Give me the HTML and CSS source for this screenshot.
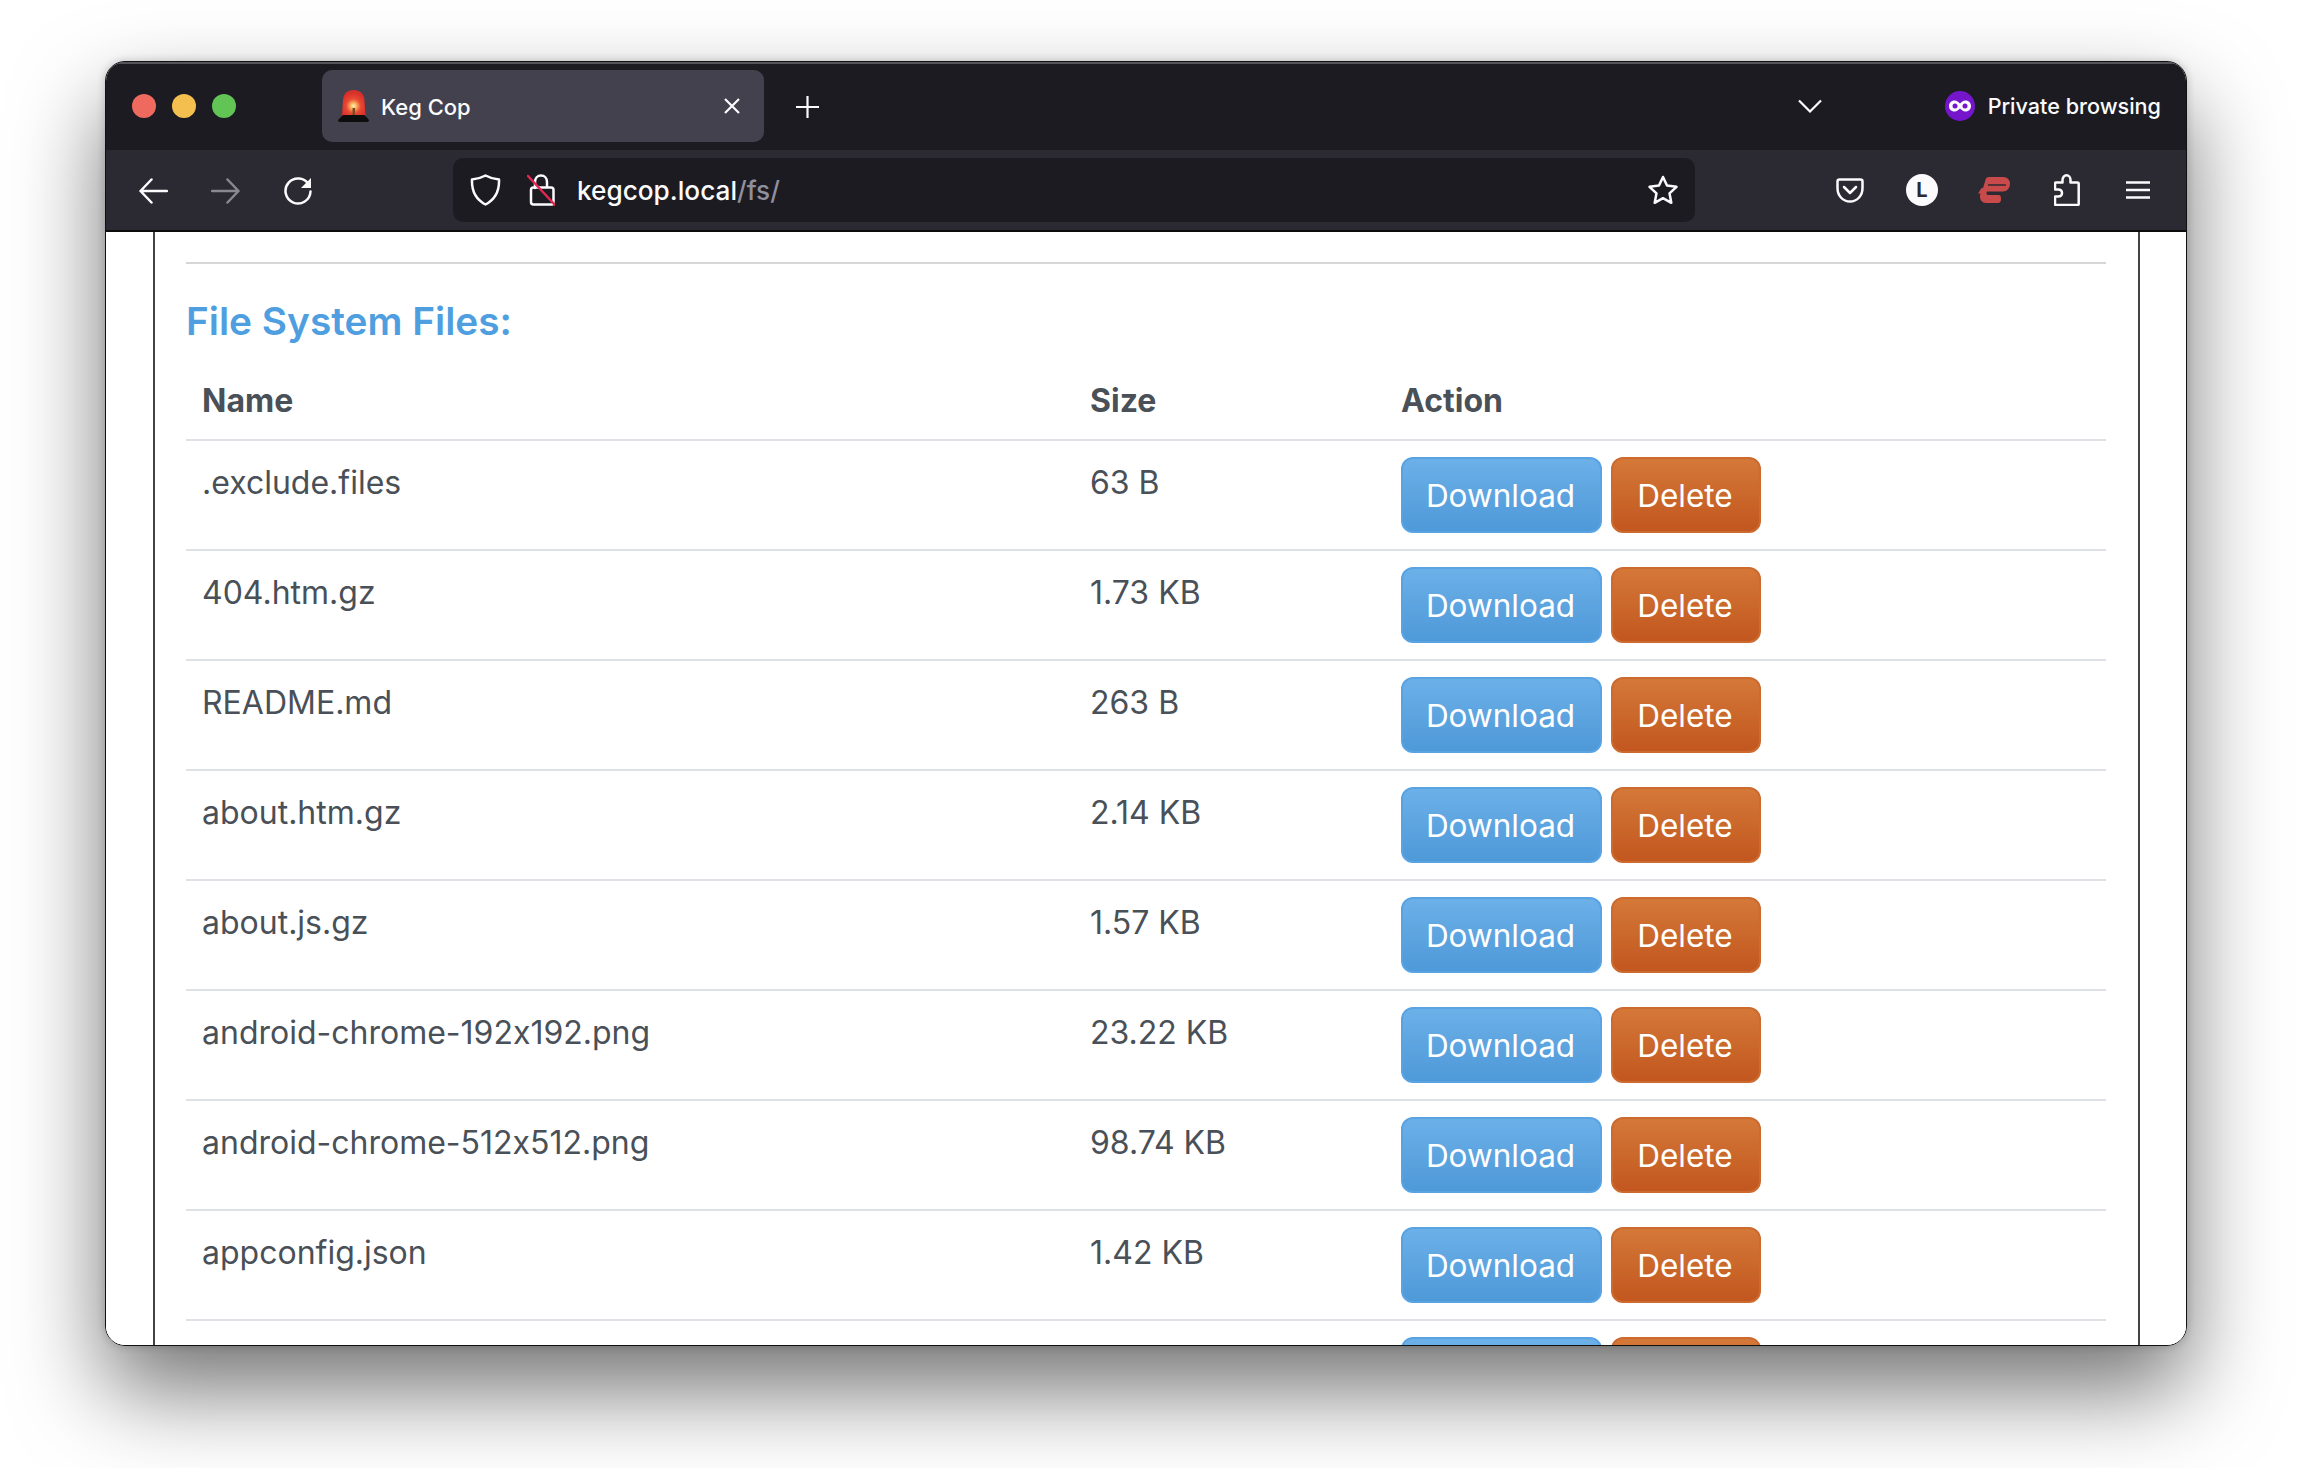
FILE: index.html
```html
<!DOCTYPE html>
<html lang="en">
<head>
    <meta charset="UTF-8">
    <title>Keg Cop</title>
    <link rel="stylesheet" href="styles.css">
</head>
<body>
    <div class="window">
        <div class="titlebar">
            <span class="light red"></span>
            <span class="light yellow"></span>
            <span class="light green"></span>
            <div class="tab">
                <svg class="siren" width="32" height="32" viewBox="0 0 32 32">
                    <defs>
                        <radialGradient id="sirenGlow" gradientUnits="userSpaceOnUse" cx="15.500" cy="16" r="13">
                            <stop offset="0" stop-color="#fff3c4"/>
                            <stop offset="0.22" stop-color="#fbb45e"/>
                            <stop offset="0.55" stop-color="#ea4a35"/>
                            <stop offset="1" stop-color="#d9302a"/>
                        </radialGradient>
                    </defs>
                    <path d="M4 26 L5 10 C5.500 3.500 9.500 0 15.500 0 C21.500 0 26 3.500 26.500 10 L27.500 26 Z" fill="url(#sirenGlow)"/>
                    <rect x="14.500" y="18" width="2.500" height="7" fill="#7a4a20"/>
                    <path d="M5 25 H26.500 L31 30 C31 31.500 30 32 28 32 H3 C1 32 0 31.500 0 30 Z" fill="#0e0e0e"/>
                </svg>
                <span class="tab-title">Keg Cop</span>
                <svg class="tab-close" width="16" height="16" viewBox="0 0 16 16"><path d="M1 1 L15 15 M15 1 L1 15"/></svg>
            </div>
            <svg class="new-tab" width="25" height="24" viewBox="0 0 25 24"><path d="M12.500 1 V23 M1 12 H24"/></svg>
            <svg class="tab-list" width="24" height="14" viewBox="0 0 24 14"><path d="M1 1.500 L12 12.500 L23 1.500"/></svg>
            <div class="private">
                <svg width="30" height="30" viewBox="0 0 30 30">
                    <circle cx="15" cy="15" r="15" fill="#7516cc"/>
                    <path d="M9.500 9.500 C12 9.500 13.500 11 15 12.500 C16.500 11 18 9.500 20.500 9.500 C24 9.500 26 12 26 15 C26 18 24 20.500 20.500 20.500 C18 20.500 16.500 19 15 17.500 C13.500 19 12 20.500 9.500 20.500 C6 20.500 4 18 4 15 C4 12 6 9.500 9.500 9.500 Z" fill="#fbfbfe"/>
                    <circle cx="10" cy="15" r="2.500" fill="#7516cc"/>
                    <circle cx="20" cy="15" r="2.500" fill="#7516cc"/>
                </svg>
                <span>Private browsing</span>
            </div>
        </div>

        <div class="toolbar">
            <svg class="icon back" width="29" height="26" viewBox="0 0 29 26"><path d="M12.500 1.500 L1.500 13 L12.500 24.500 M1.500 13 H28"/></svg>
            <svg class="icon forward" width="29" height="26" viewBox="0 0 29 26"><path d="M16.500 1.500 L27.500 13 L16.500 24.500 M27.500 13 H1"/></svg>
            <svg class="icon reload" width="29" height="28" viewBox="0 0 29 28">
                <path d="M26 8 A12.500 12.500 0 1 0 27.500 14.500"/>
                <path class="solid" d="M28 1 V11 H18 Z"/>
            </svg>
            <div class="urlbar">
                <svg class="icon shield" width="31" height="32" viewBox="0 0 31 32"><path d="M15.500 1.500 C19 3.500 24 5 29 5.500 C29.500 17 25 25.500 15.500 30.500 C6 25.500 1.500 17 2 5.500 C7 5 12 3.500 15.500 1.500 Z"/></svg>
                <svg class="icon lock" width="28" height="32" viewBox="0 0 28 32">
                    <path d="M8 14 V8 C8 4 10.500 1.500 14 1.500 C17.500 1.500 20 4 20 8 V13 M4 16 V28 C4 29.500 5 30.500 6.500 30.500 H25 C26 30.500 26.500 29.500 26.500 28 V16 C26.500 14.500 25.500 13.500 24 13.500 H6.500 C5 13.500 4 14.500 4 16 Z"/>
                    <path class="strike" d="M1 2 L28 31"/>
                </svg>
                <span class="url">kegcop.local<span class="url-path">/fs/</span></span>
                <svg class="icon star" width="32" height="30" viewBox="0 0 32 30"><path d="M16 2 L20 10.500 L29.500 11.800 L22.500 18.300 L24.300 27.800 L16 23.200 L7.700 27.800 L9.500 18.300 L2.500 11.800 L12 10.500 Z"/></svg>
            </div>
            <svg class="icon pocket" width="28" height="25" viewBox="0 0 28 25"><path d="M3.500 1.500 H24.500 C25.800 1.500 26.500 2.200 26.500 3.500 V10 C26.500 18 21 23.500 14 23.500 C7 23.500 1.500 18 1.500 10 V3.500 C1.500 2.200 2.200 1.500 3.500 1.500 Z M8 9 L14 15 L20 9"/></svg>
            <span class="account">L</span>
            <svg class="vpn" width="32" height="26" viewBox="0 0 32 26">
                <path d="M8 1.500 C8.500 0.500 10 0 12 0 H25 C29.500 0 32 3 32 6.500 C32 11 29 14.500 25 14.500 H9 C8 16 8.500 18 10 18 H20.500 C22.500 18 23 19.500 23 22 C23 24.500 22 26 20 26 H8 C4 26 2 23 2 19.500 C2 18.500 2 17.500 2.500 16.500 H0 L3.500 11 H5 Z"/>
                <path class="vpn-slit" d="M10 8 H28"/>
            </svg>
            <svg class="icon puzzle" width="26" height="32" viewBox="0 0 26 32"><path d="M2 31 C1.300 31 1 30.500 1 30 V22.500 H4 C6.500 22.500 8 21 8 19 C8 17 6.500 15.500 4 15.500 H1 V9.500 C1 9 1.300 8.500 2 8.500 H8.500 V6 C8.500 3 10.500 1.300 12.500 1.300 C14.500 1.300 16.500 3 16.500 6 V8.500 H23.500 C24.300 8.500 24.700 9 24.700 9.500 V30 C24.700 30.500 24.300 31 23.500 31 Z"/></svg>
            <svg class="icon menu" width="24" height="18" viewBox="0 0 24 18"><path d="M0 1.500 H24 M0 9 H24 M0 16.500 H24"/></svg>
        </div>

        <div class="page">
            <div class="card">
                <hr class="rule">
                <h2 class="heading">File System Files:</h2>
                <table class="files">
                    <thead>
                        <tr>
                            <th class="col-name">Name</th>
                            <th class="col-size">Size</th>
                            <th>Action</th>
                        </tr>
                    </thead>
                    <tbody>
                        <tr><td>.exclude.files</td><td>63 B</td><td class="actions"><button class="btn primary">Download</button><button class="btn danger">Delete</button></td></tr>
                        <tr><td>404.htm.gz</td><td>1.73 KB</td><td class="actions"><button class="btn primary">Download</button><button class="btn danger">Delete</button></td></tr>
                        <tr><td>README.md</td><td>263 B</td><td class="actions"><button class="btn primary">Download</button><button class="btn danger">Delete</button></td></tr>
                        <tr><td>about.htm.gz</td><td>2.14 KB</td><td class="actions"><button class="btn primary">Download</button><button class="btn danger">Delete</button></td></tr>
                        <tr><td>about.js.gz</td><td>1.57 KB</td><td class="actions"><button class="btn primary">Download</button><button class="btn danger">Delete</button></td></tr>
                        <tr><td>android-chrome-192x192.png</td><td>23.22 KB</td><td class="actions"><button class="btn primary">Download</button><button class="btn danger">Delete</button></td></tr>
                        <tr><td>android-chrome-512x512.png</td><td>98.74 KB</td><td class="actions"><button class="btn primary">Download</button><button class="btn danger">Delete</button></td></tr>
                        <tr><td>appconfig.json</td><td>1.42 KB</td><td class="actions"><button class="btn primary">Download</button><button class="btn danger">Delete</button></td></tr>
                        <tr><td></td><td></td><td class="actions"><button class="btn primary"></button><button class="btn danger"></button></td></tr>
                    </tbody>
                </table>
            </div>
        </div>
    </div>
</body>
</html>
```

FILE: styles.css
```css
html, body {
    margin: 0;
    height: 1468px;
    overflow: hidden;
}
body {
    background-color: #fff;
    font-family: Inter, "Liberation Sans", sans-serif;
    font-feature-settings: "calt" 0;
    padding: 61px 0 0 105px;
    box-sizing: border-box;
}
.window {
    width: 2082px;
    height: 1285px;
    box-sizing: border-box;
    border: 1px solid #111;
    border-radius: 20px;
    overflow: hidden;
    display: flex;
    flex-direction: column;
    box-shadow: 0 44px 90px rgba(0, 0, 0, 0.55), 0 0 8px rgba(0, 0, 0, 0.2);
}

/* title bar */
.titlebar {
    height: 88px;
    flex: none;
    background-color: #1c1b22;
    box-shadow: inset 0 2px 0 #55545a;
    display: flex;
    align-items: center;
    padding: 0 25px 0 26px;
    box-sizing: border-box;
}
.light {
    width: 24px;
    height: 24px;
    border-radius: 50%;
    margin-right: 16px;
    flex: none;
}
.red { background-color: #ee6a5f; }
.yellow { background-color: #f5bf4f; }
.green { background-color: #61c454; margin-right: 0; }
.tab {
    width: 442px;
    height: 72px;
    margin-left: 86px;
    background-color: #42414d;
    border-radius: 10px;
    display: flex;
    align-items: center;
    padding: 0 24px 0 16px;
    box-sizing: border-box;
}
.tab-title {
    color: #fbfbfe;
    font-size: 22px;
    margin: 2px 0 0 11px;
    font-weight: 500;
}
.tab-close {
    margin-left: auto;
}
.tab-close path, .new-tab path, .tab-list path {
    stroke: #fbfbfe;
    stroke-width: 2.2;
    fill: none;
}
.new-tab {
    margin: 2px 0 0 31px;
}
.tab-list {
    margin-left: auto;
}
.private {
    display: flex;
    align-items: center;
    margin-left: 123px;
    color: #fbfbfe;
    font-size: 21.6px;
    font-weight: 500;
}
.private span {
    margin-left: 13px;
}

/* toolbar */
.toolbar {
    height: 82px;
    flex: none;
    background-color: #2b2a33;
    border-bottom: 2px solid #0c0c0d;
    box-sizing: border-box;
    display: flex;
    align-items: center;
    padding-left: 33px;
}
.icon path {
    stroke: #fbfbfe;
    stroke-width: 2.5;
    fill: none;
    stroke-linejoin: round;
    stroke-linecap: round;
}
.icon path.solid {
    fill: #fbfbfe;
    stroke: none;
}
.icon path.strike {
    stroke: #e22850;
}
.back {
    margin-top: 2px;
}
.forward {
    margin: 2px 0 0 43px;
    opacity: 0.45;
}
.reload {
    margin: 2px 0 0 43px;
}
.urlbar {
    width: 1242px;
    height: 64px;
    margin-left: 141px;
    background-color: #1c1b22;
    border-radius: 10px;
    display: flex;
    align-items: center;
    padding: 0 16px 0 17px;
    box-sizing: border-box;
}
.lock {
    margin-left: 26px;
}
.url {
    margin-left: 22px;
    color: #fbfbfe;
    font-size: 26.2px;
    font-weight: 500;
}
.url-path {
    color: #8f8f9d;
}
.star {
    margin-left: auto;
}
.pocket {
    margin-left: 141px;
}
.account {
    width: 32px;
    height: 32px;
    margin-left: 42px;
    border-radius: 50%;
    background-color: #fbfbfe;
    color: #2b2a33;
    font-size: 20px;
    font-weight: 700;
    display: flex;
    align-items: center;
    justify-content: center;
}
.vpn {
    margin-left: 40px;
    fill: #c94a4a;
}
.vpn-slit {
    stroke: #2b2a33;
    stroke-width: 1.5;
}
.puzzle {
    margin-left: 44px;
}
.menu {
    margin-left: 46px;
}

/* page */
.page {
    flex: 1;
    min-height: 0;
    overflow: hidden;
    background-color: #fff;
}
.card {
    margin: 0 46px 0 47px;
    padding: 30px 32px 0 31px;
    border-left: 2px solid #444;
    border-right: 2px solid #444;
    min-height: 100%;
}
.rule {
    margin: 0;
    border: 0;
    height: 2px;
    background-color: #d6d6d6;
}
.heading {
    margin: 33px 0 14px;
    color: #4f9fe0;
    font-size: 38.8px;
    line-height: 48px;
    font-weight: 600;
}
.files {
    width: 100%;
    border-collapse: collapse;
    table-layout: fixed;
    color: #495057;
    font-size: 32px;
    line-height: 51px;
}
.files th {
    text-align: left;
    font-weight: 700;
    padding: 16px 16px 13px;
    border-bottom: 2px solid #dee2e6;
}
.files td {
    padding: 16px;
    vertical-align: top;
    border-bottom: 2px solid #dee2e6;
}
.col-name { width: 856px; }
.col-size { width: 279px; }
.btn {
    height: 76px;
    padding: 0 2px 0 0;
    border-radius: 12px;
    color: #fff;
    font-family: inherit;
    font-size: 31.5px;
    cursor: pointer;
    vertical-align: top;
}
.primary {
    width: 201px;
    background: linear-gradient(to bottom, #6cb0e8, #4e99d8);
    border: 2px solid #5aa3e2;
}
.danger {
    width: 150px;
    margin-left: 9px;
    background: linear-gradient(to bottom, #d47838, #c2571f);
    border: 2px solid #cc6a30;
}
```
